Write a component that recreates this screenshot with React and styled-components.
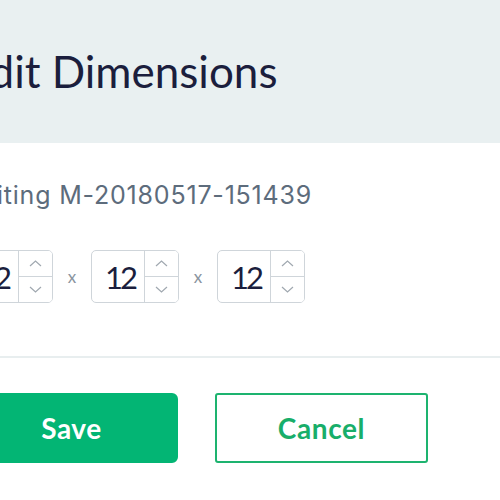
import styled, { createGlobalStyle } from 'styled-components';

const Global = createGlobalStyle`
  html, body {
    margin: 0;
    background: #ffffff;
    font-family: 'Lato', 'Noto Sans', sans-serif;
    overflow: hidden;
  }
`;

const Modal = styled.div`
  width: 535px;
  margin: 0 0 0 -35px;
  background: #ffffff;
`;

const Header = styled.div`
  background: #e9f0f1;
  padding: 50px 0;
`;

const Title = styled.h2`
  margin: 0;
  font-size: 44px;
  line-height: 43px;
  font-weight: 400;
  color: #1b1e3d;
`;

const Body = styled.div`
  padding: 40px 0 53px;
  border-bottom: 2px solid #e8eeef;
`;

const Subtitle = styled.p`
  margin: 0 0 42px;
  font-family: 'Inter', 'Lato', sans-serif;
  font-size: 25px;
  line-height: 25px;
  letter-spacing: 0.8px;
  color: #5d6c7c;
`;

const Row = styled.div`
  display: flex;
  align-items: center;
`;

const Times = styled.span`
  width: 38px;
  text-align: center;
  font-size: 17px;
  color: #8a95a0;
`;

const Spinner = styled.div`
  display: flex;
  width: 88px;
  height: 53px;
  box-sizing: border-box;
  border: 1px solid #cfd5da;
  border-radius: 5px;
  overflow: hidden;
`;

const Value = styled.div`
  flex: 1;
  display: flex;
  align-items: center;
  justify-content: flex-end;
  padding-right: 9px;
  font-size: 31px;
  letter-spacing: -3px;
  color: #1b1e3d;
  border-right: 1px solid #cfd5da;
`;

const Arrows = styled.div`
  width: 33px;
  display: flex;
  flex-direction: column;
`;

const Arrow = styled.button`
  flex: 1;
  display: flex;
  align-items: center;
  justify-content: center;
  padding: 0;
  border: 0;
  background: #ffffff;
  border-top: ${(p) => (p.down ? '1px solid #cfd5da' : '0')};
`;

const Footer = styled.div`
  display: flex;
  gap: 37px;
  padding-top: 35px;
`;

const Button = styled.button`
  width: 213px;
  height: 70px;
  box-sizing: border-box;
  border-radius: ${(p) => (p.primary ? '6px' : '3px')};
  border: 2px solid ${(p) => (p.primary ? '#03b574' : '#1db36f')};
  background: ${(p) => (p.primary ? '#03b574' : '#ffffff')};
  color: ${(p) => (p.primary ? '#ffffff' : '#18ae6a')};
  font-family: 'Lato', sans-serif;
  font-weight: 700;
  font-size: 28px;
  letter-spacing: 0.6px;
`;

const Chevron = ({ up }) => (
  <svg width="13" height="7" viewBox="0 0 13 7">
    <path
      d={up ? 'M1 6 L6.5 1 L12 6' : 'M1 1 L6.5 6 L12 1'}
      fill="none"
      stroke="#a0a8b0"
      strokeWidth="1.2"
    />
  </svg>
);

const NumberBox = ({ value }) => (
  <Spinner>
    <Value>{value}</Value>
    <Arrows>
      <Arrow>
        <Chevron up />
      </Arrow>
      <Arrow down>
        <Chevron />
      </Arrow>
    </Arrows>
  </Spinner>
);

function App() {
  return (
    <>
      <Global />
      <Modal>
        <Header>
          <Title>Edit Dimensions</Title>
        </Header>
        <Body>
          <Subtitle>Editing M-20180517-151439</Subtitle>
          <Row>
            <NumberBox value="12" />
            <Times>x</Times>
            <NumberBox value="12" />
            <Times>x</Times>
            <NumberBox value="12" />
          </Row>
        </Body>
        <Footer>
          <Button primary>Save</Button>
          <Button>Cancel</Button>
        </Footer>
      </Modal>
    </>
  );
}

export default App;
